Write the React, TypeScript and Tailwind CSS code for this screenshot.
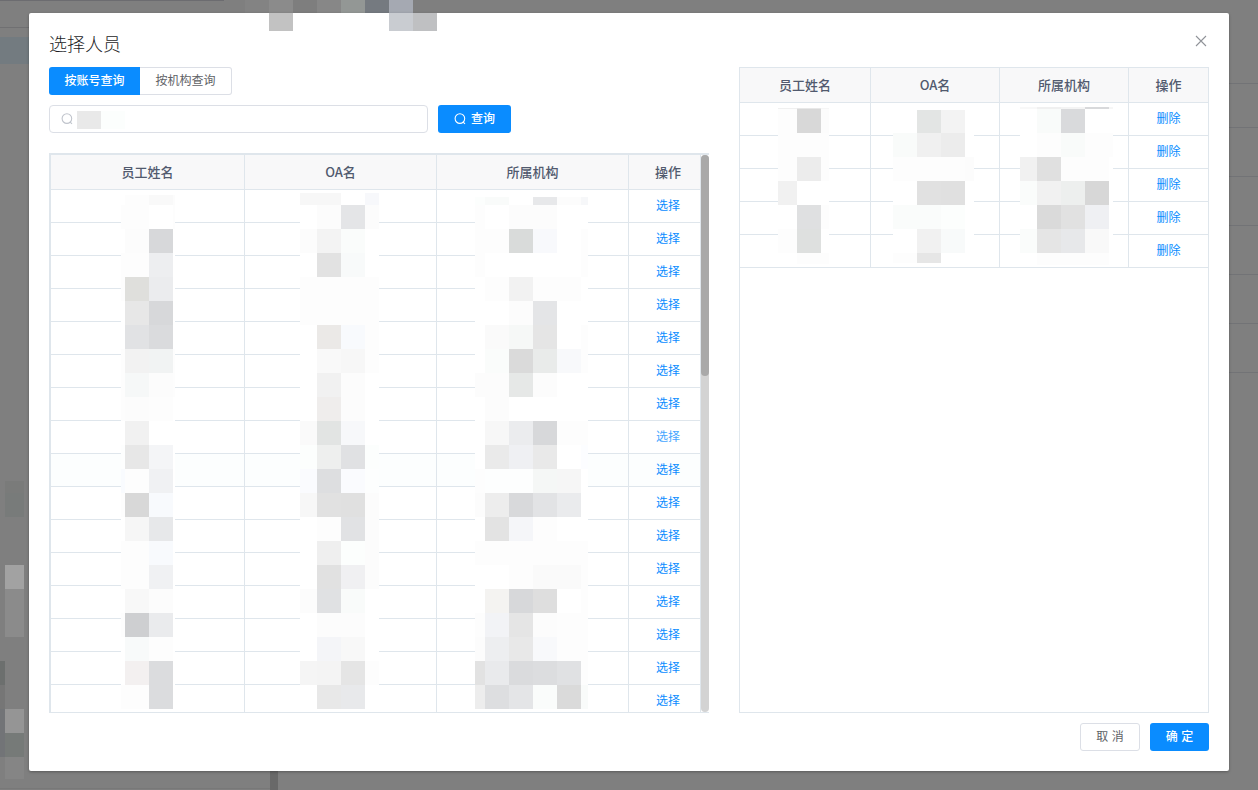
import React from "react";

const W = "fff";
const D = "fdfdfd";
const C = "fcfcfc";

type MosaicProps = {
  className: string;
  cols: number[];
  first: number;
  last?: number;
  data: string[][];
};

/** Pixelated cover laid over private cell contents. */
function Mosaic({ className, cols, first, last = 24, data }: MosaicProps) {
  return (
    <div
      aria-hidden
      className={`pointer-events-none absolute grid ${className}`}
      style={{
        gridTemplateColumns: cols.map((c) => `${c}px`).join(" "),
        gridTemplateRows: data
          .map((_, i) => (i === 0 ? `${first}px` : i === data.length - 1 ? `${last}px` : "24px"))
          .join(" "),
      }}
    >
      {data.flatMap((row, y) => row.map((c, x) => <div key={`${y}-${x}`} style={{ backgroundColor: `#${c}` }} />))}
    </div>
  );
}

const leftName = [
  [W, D, "f9f9f9", C], [D, D, W, D], [W, C, "d7d8da", W], [D, D, "edeef0", W],
  [D, "dfdfdc", "ebecee", W], [W, "e7e7e7", "d7d8da", W], [W, "e1e2e4", "dadbdd", W],
  [D, "f2f2f2", "f1f3f3", D], [D, "f6f8f8", C, D], [D, C, D, W], [W, "f1f1f1", W, W],
  ["fdfefe", "e7e7e7", "f4f5f7", W], ["f9fbfe", D, "f0f1f3", W], [D, "d8d8d8", "f8fafd", W],
  [W, "f6f6f6", "e7e8ea", W], [D, D, "f8fafd", W], [D, D, "f0f1f3", W], [W, "f8f8f8", C, W],
  [D, "cecfd1", "eaebed", W], [W, "f8fafa", D, W], [W, "f3f0f0", "dbdcde", W], [D, D, "dbdcde", W],
];

const leftOa = [
  ["f7f7f7", "f7f7f7", W, "f7f8fb"], [W, C, "e4e5e7", C], [C, "f3f3f3", "fafcfb", W],
  [W, "e2e2e2", "f8fafa", W], [D, D, D, D], [D, D, D, D], [W, "ebe9e7", "f8fafd", D],
  [W, "f9f9f9", "f7f7f7", D], [W, "f1f1f1", C, W], [W, "efedec", C, W],
  ["fafafa", "e2e4e3", "f7f8fa", W], ["fcfefd", "eeefee", "e0e1e3", "fcfefd"],
  ["fafbfe", "dddee0", "fafbfe", "fdfefe"], ["f7f7f7", "e1e1e1", "e0e0e0", C],
  [W, D, "e1e2e4", C], [W, "efefef", "fcfefd", C], [W, "e1e1e1", "f0f0f2", C],
  [C, "e0e1e3", "f9fbfa", W], [W, C, C, W], [W, "f4f5f8", "f8f8f8", W],
  ["f5f5f5", "f4f4f4", "e5e5e5", D], [W, "e8e8e8", "e8e9eb", W],
];

const leftOrg = [
  ["fcfefd", "f9fbfa", W, "e7e8ea", C, "f6f7f9"], [D, W, C, C, W, W],
  [D, D, "d9dbda", "f8f9fc", W, D], [D, W, W, W, W, D], [W, D, "f2f2f2", D, D, W],
  [W, W, C, "e4e5e7", W, W], [W, "fafafa", "f6f8f7", "e5e5e5", W, D],
  [W, "fafcfb", "dadada", "e9ebea", "f8f9fb", D], [C, C, "e6e8e7", C, W, W],
  [W, C, W, W, W, W], [W, "f7f7f7", "ebecee", "d7d8da", D, D],
  [W, "eaeaea", "eff0f3", "e9e9e9", W, "fcfdff"], [D, "fdfefe", "fdfefe", "f5f7f6", "f6f6f6", W],
  [C, "ededed", "d8d9db", "e2e3e5", "eaebed", W], [W, "e3e3e3", "f5f6f9", D, W, W],
  [D, D, D, D, D, D], [W, W, D, "fafafa", "fafafa", D],
  [W, "f4f3f1", "d7d8da", "dedede", W, D], [D, "f2f3f6", "e5e5e5", C, D, D],
  [C, "edeef0", "e8e8e8", "f8f9fb", D, D], ["e2e2e2", "e9eaec", "dadbdd", "dcdddf", "e0e1e3", D],
  ["ededed", "dddee0", "e4e5e7", "fafcfb", "dadada", "f9fbfa"],
];

const rightName = [
  ["f0f0f0", "e8e8e8", "f6f6f6"], [D, "d8d8d8", C], [D, D, D], [D, "ececec", D],
  ["f1f1f1", W, W], [W, "dfe0e1", D], [D, "dee0df", W], [W, D, D],
];

const rightOa = [
  [W, "e3e5e4", "f3f3f3", W], ["f9fbfa", "f0f0f0", "ececec", W], [D, D, D, C],
  [W, "e1e1e1", "e0e0e0", W], ["fafcfb", "fafcfb", "fcfefd", W], [W, "f1f1f1", "f8fafa", W],
  [D, "e6e6e6", W, W],
];

const rightOrg = [
  ["f8f8f8", "f0f0f0", "f4f4f4", "d8d9db", "f6f6f6"], [W, "f9fbfa", "d9dadc", W, W],
  [W, D, "f9fbfa", D, D], ["f1f1f1", "e0e0e0", D, D, W],
  ["fafcfb", "f1f1f1", "edefee", "d7d7d7", W], [W, "dadada", "e1e1e1", "eff0f3", W],
  ["fafcfb", "e5e5e5", "e7e8ea", "f9f9f9", W], [W, D, D, D, W],
];

function SearchIcon({ className }: { className: string }) {
  return (
    <svg viewBox="0 0 12 12" className={className} fill="none" stroke="currentColor" strokeWidth="1.1">
      <circle cx="5.9" cy="5.6" r="4.8" />
      <path d="M9.2 9.1 11 10.9" />
    </svg>
  );
}

const heads = ["员工姓名", "OA名", "所属机构", "操作"];
const edge = "border-[#dfe6ec]";

function Head({ cols, inset }: { cols: string; inset?: boolean }) {
  return (
    <div className={`grid h-[35px] shrink-0 border-b ${edge} bg-[#f8f8f9] ${cols}`}>
      {heads.map((h, i) => (
        <div
          key={h}
          className={`flex items-center justify-center pb-px text-[13px] font-medium text-[#515a6e] ${i < 3 ? `border-r ${edge}` : inset ? "pl-[7px]" : ""}`}
        >
          {h}
        </div>
      ))}
    </div>
  );
}

type RowProps = { cols: string; action: string; tint?: boolean; hover?: boolean; inset?: boolean };

function Row({ cols, action, tint, hover, inset }: RowProps) {
  return (
    <div className={`grid h-[33px] shrink-0 border-b ${edge} ${cols} ${tint ? "bg-[#fcfefe]" : "bg-white"}`}>
      <div className={`border-r ${edge}`} />
      <div className={`border-r ${edge}`} />
      <div className={`border-r ${edge}`} />
      <button
        className={`flex items-center justify-center pb-[3px] text-xs ${inset ? "pl-[7px]" : ""} ${hover ? "text-[#46a6ff]" : "text-[#0a8cff]"}`}
      >
        {action}
      </button>
    </div>
  );
}

const leftCols = "grid-cols-[194px_192px_192px_1fr]";
const rightCols = "grid-cols-[131px_129px_129px_1fr]";

function Backdrop() {
  return (
    <div aria-hidden>
      <div className="absolute left-0 top-0 h-px w-56 bg-[#6c6c70]" />
      <div className="absolute left-0 top-[27px] h-px w-[29px] bg-[#707072]" />
      <div className="absolute left-0 top-[37px] h-[27px] w-[29px] bg-[#737b80]" />
      <div className="absolute left-[245px] top-0 grid h-[13px] grid-cols-[repeat(7,24px)]">
        <div className="bg-[#838383]" />
        <div className="bg-[#8b8b8b]" />
        <div className="bg-[#7e7e7e]" />
        <div className="bg-[#878787]" />
        <div className="bg-[#939795]" />
        <div className="bg-[#757a80]" />
        <div className="bg-[#a5a9b2]" />
      </div>
      {[83, 127, 176, 225, 274, 323, 372].map((y) => (
        <div key={y} className="absolute right-0 h-px w-[29px] bg-[#727376]" style={{ top: y }} />
      ))}
      <div className="absolute left-[5px] top-[481px] h-3 w-[19px] bg-[#7a7b7a]" />
      <div className="absolute left-[5px] top-[493px] h-6 w-[19px] bg-[#787b7a]" />
      <div className="absolute left-[5px] top-[565px] h-6 w-[19px] bg-[#a2a2a2]" />
      <div className="absolute left-[5px] top-[589px] h-12 w-[19px] bg-[#8b8b8b]" />
      <div className="absolute left-0 top-[661px] h-6 w-[5px] bg-[#6c6f6e]" />
      <div className="absolute left-0 top-[685px] h-6 w-[5px] bg-[#767676]" />
      <div className="absolute left-0 top-[709px] h-12 w-[5px] bg-[#727477]" />
      <div className="absolute left-[5px] top-[709px] h-6 w-[19px] bg-[#959595]" />
      <div className="absolute left-[5px] top-[733px] h-6 w-[19px] bg-[#767a78]" />
      <div className="absolute left-[5px] top-[757px] h-[22px] w-[19px] bg-[#858585]" />
      <div className="absolute left-[270px] top-[771px] h-[19px] w-2 bg-[#696969]" />
      <div className="absolute left-0 top-[788px] h-px w-[270px] bg-[#787878]" />
    </div>
  );
}

export default function App() {
  return (
    <div className="relative flex h-[790px] w-[1258px] items-start overflow-hidden bg-[#7f7f7f] px-[29px] pt-[13px] font-['Noto_Sans_CJK_SC',sans-serif]">
      <Backdrop />
      <section className="relative flex h-[758px] w-[1200px] gap-[30px] rounded-xs bg-white px-5 shadow-[0_1px_3px_rgba(0,0,0,0.3)]">
        <div className="flex w-[660px] flex-col">
          <h1 className="mt-[18px] h-9 text-lg font-light leading-[25px] text-[#1c1d1f]">选择人员</h1>
          <div className="flex h-7 text-xs">
            <button className="w-[91px] rounded-l-[3px] bg-[#0a8cff] pb-0.5 font-medium text-white">按账号查询</button>
            <button className="w-[92px] rounded-r-[3px] border border-l-0 border-[#dcdfe6] pb-0.5 text-[#606266]">按机构查询</button>
          </div>
          <div className="mt-2.5 flex h-7 gap-2.5">
            <div className="flex w-[379px] items-center rounded-[4px] border border-[#dcdfe6] pl-[11px]">
              <SearchIcon className="mr-1 h-3 w-3 text-[#c0c4cc]" />
              <span className="mt-0.5 h-[18px] w-6 bg-[#e9e9e9]" />
              <span className="mt-0.5 h-[18px] w-6 bg-[#fcfefd]" />
            </div>
            <button className="flex w-[73px] items-center justify-center gap-[5px] rounded-[3px] bg-[#0a8cff] pb-px text-xs font-medium text-white">
              <SearchIcon className="h-3 w-3" />
              <span className="pb-px">查询</span>
            </button>
          </div>
          <div className={`relative mt-5 flex h-[560px] overflow-hidden border-b border-l-2 border-t-2 ${edge}`}>
            <div className={`flex w-[650px] flex-col overflow-hidden border-r ${edge}`}>
              <Head cols={leftCols} inset />
              {Array.from({ length: 16 }, (_, i) => (
                <Row key={i} cols={leftCols} action="选择" tint={i === 8} hover={i === 7} inset />
              ))}
            </div>
            <div className="h-full w-2 rounded-[4px] bg-[#d3d3d3]">
              <div className="h-[221px] rounded-[4px] bg-[#a9a9a9]" />
            </div>
            <Mosaic className="left-[70px] top-10" cols={[4, 24, 24, 2]} first={10} data={leftName} />
            <Mosaic className="left-[249px] top-[38px]" cols={[17, 24, 24, 14]} first={12} data={leftOa} />
            <Mosaic className="left-[424px] top-[42px]" cols={[10, 24, 24, 24, 24, 7]} first={8} data={leftOrg} />
          </div>
        </div>
        <div className="flex w-[470px] flex-col pt-[54px]">
          <div className={`relative flex h-[646px] flex-col border ${edge}`}>
            <Head cols={rightCols} />
            {Array.from({ length: 5 }, (_, i) => (
              <Row key={i} cols={rightCols} action="删除" />
            ))}
            <Mosaic className="left-[38px] top-10" cols={[19, 24, 8]} first={1} last={11} data={rightName} />
            <Mosaic className="left-[153px] top-[42px]" cols={[24, 24, 24, 9]} first={23} last={10} data={rightOa} />
            <Mosaic className="left-[280px] top-[39px]" cols={[17, 24, 24, 24, 4]} first={2} last={12} data={rightOrg} />
          </div>
          <div className="mt-2.5 flex h-7 justify-end gap-2.5 text-xs">
            <button className="w-[60px] rounded-[3px] border border-[#dcdfe6] pb-0.5 text-[#606266] [word-spacing:1px]">取 消</button>
            <button className="w-[59px] rounded-[3px] bg-[#0a8cff] pb-0.5 font-medium text-white [word-spacing:1px]">确 定</button>
          </div>
        </div>
        <button aria-label="关闭" className="absolute right-[22px] top-[22px] text-[#909399]">
          <svg viewBox="0 0 12 12" className="h-3 w-3" fill="none" stroke="currentColor" strokeWidth="1.1">
            <path d="M1 1 11 11M11 1 1 11" />
          </svg>
        </button>
        <div aria-hidden className="absolute left-60 top-0 h-[18px] w-6 bg-[#c2c2c2]" />
        <div aria-hidden className="absolute left-[360px] top-0 h-[18px] w-6 bg-[#c9ccd1]" />
        <div aria-hidden className="absolute left-96 top-0 h-[18px] w-6 bg-[#bfc0c2]" />
      </section>
    </div>
  );
}
